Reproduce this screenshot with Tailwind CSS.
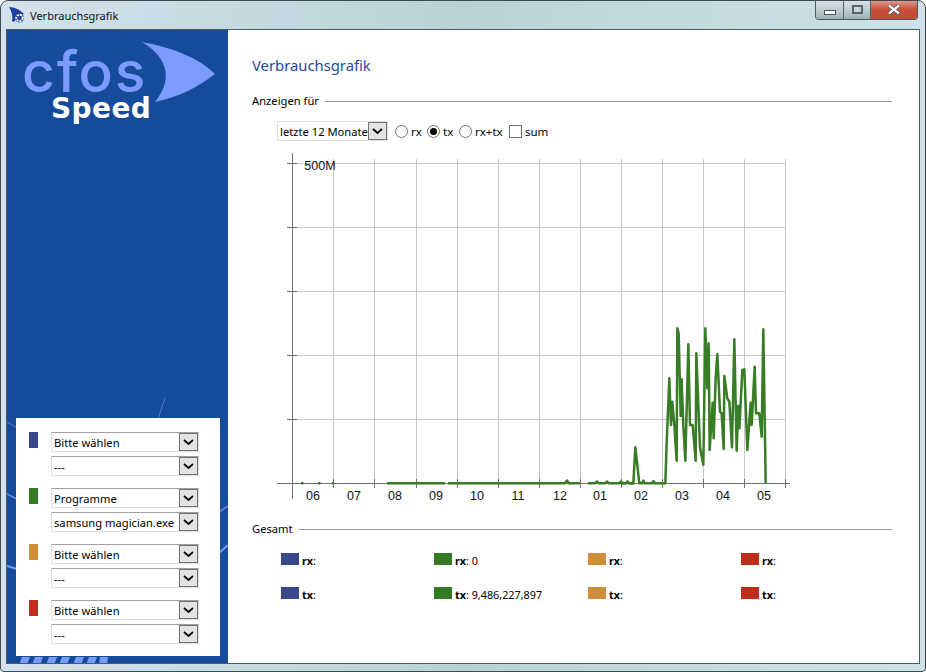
<!DOCTYPE html>
<html lang="de">
<head>
<meta charset="utf-8">
<title>Verbrauchsgrafik</title>
<script src="https://cdn.jsdelivr.net/npm/@tailwindcss/browser@4"></script>
</head>
<body class="bg-white overflow-hidden">
<div class="w-[926px] h-[672px] flex flex-col rounded-t-lg rounded-b-sm border border-[#3c4a52] bg-gradient-to-r from-[#d3e2ec] via-[#b9d2d8] to-[#cfe2ea] font-['Noto_Sans','Open_Sans',sans-serif] text-[11.2px] text-black overflow-hidden">
  <!-- title bar -->
  <div class="h-[28px] shrink-0 flex items-start pl-[8px] pr-[7px]">
    <svg class="mt-[6px] w-[17px] h-[17px]" viewBox="0 0 17 17"><path d="M0 0 C6 0 11 3 15 7 L9 9 L5 15 L3 14 C4 9 3 5 0 0Z" fill="#1c3f9c"/><circle cx="10.500" cy="11" r="4.500" fill="#1c3f9c"/><circle cx="10.500" cy="11" r="3.200" fill="none" stroke="#fff" stroke-width="2" stroke-dasharray="2 1"/><circle cx="10.500" cy="11" r="1" fill="#1c3f9c"/></svg>
    <span class="ml-[4px] mt-[6px] text-[11px] leading-[18px] text-[#101010]">Verbrauchsgrafik</span>
    <div class="ml-auto flex h-[20px] -mt-px border border-t-0 border-[#4c5a62] rounded-b-[4px] overflow-hidden">
      <div class="w-[28px] flex items-center justify-center border-r border-[#56646c] bg-gradient-to-b from-[#d7e2e6] via-[#c0ced2] to-[#9fb0b6]"><span class="w-[12px] h-[5px] mt-[5px] bg-white border border-[#4a5458]"></span></div>
      <div class="w-[27px] flex items-center justify-center border-r border-[#56646c] bg-gradient-to-b from-[#d7e2e6] via-[#c0ced2] to-[#9fb0b6]"><span class="w-[11px] h-[9px] border-2 border-[#5a6468] bg-[#c8d4d8]"></span></div>
      <div class="w-[46px] flex items-center justify-center bg-gradient-to-b from-[#e0a090] via-[#c9503a] to-[#c04a36]"><svg width="14" height="11" viewBox="0 0 14 11"><path d="M2 1.500 L12 9.500 M12 1.500 L2 9.500" stroke="#4a4a4a" stroke-width="4"/><path d="M2 1.500 L12 9.500 M12 1.500 L2 9.500" stroke="#fff" stroke-width="2.400"/></svg></div>
    </div>
  </div>
  <!-- client area -->
  <div class="flex-1 mx-[5px] mb-[7px] flex border border-[#4c5a62] bg-white min-h-0">
    <!-- sidebar -->
    <aside class="relative w-[221px] shrink-0 bg-[#164a9a] overflow-hidden">
      <svg class="absolute inset-0" width="221" height="636" viewBox="7 29 221 636">
        <path d="M142 41 C175 47 200 58 215 73 C197 87 178 96 155 101 C172 80 170 58 142 41Z" fill="#7b9bff"/>
        <path d="M165 397 L158 418" stroke="#4f7ad0" stroke-width="1"/>
        <path d="M7 421 L17 427" stroke="#4f7ad0" stroke-width="1"/>
        <path d="M7 493 L17 498" stroke="#6c90e8" stroke-width="1.500"/>
        <path d="M7 565 L17 568" stroke="#7b9bff" stroke-width="2"/>
        <path d="M219 511 L228 505" stroke="#6c90e8" stroke-width="1.500"/>
        <path d="M219 552 L228 544" stroke="#7b9bff" stroke-width="2"/>
        <path d="M22 656 h8 l-3 8 h-8Z M35 656 h8 l-3 8 h-8Z M49 656 h8 l-3 8 h-8Z M62 656 h8 l-3 8 h-8Z M76 656 h8 l-3 8 h-8Z M89 656 h8 l-3 8 h-8Z M100 656 h8 l-1 8 h-8Z" fill="#7b9bff"/>
      </svg>
      <div class="absolute left-[15px] top-[4px] text-[#7b9bff] font-['Inter',sans-serif] font-medium text-[57px] leading-[76px] tracking-[1.8px]">cfos</div>
      <div class="absolute left-[44px] top-[59px] text-white font-['DejaVu_Sans',sans-serif] font-bold text-[28px] leading-[40px] tracking-[0.4px]">Speed</div>
      <div class="absolute left-[9px] top-[388px] w-[204px] h-[238px] bg-white pt-[14px] pl-[13px] flex flex-col gap-[8px]">
        <div class="flex h-[48px]"><span class="w-[9px] h-[16px] bg-[#3b478d]"></span><div class="ml-[13px] flex flex-col gap-[4px]">
          <div class="w-[148px] h-[20px] flex border border-[#e0e0e0] border-t-[#a0a0a0] pl-[2px] leading-[19px]"><span class="flex-1">Bitte wählen</span><span class="w-[19px] h-[18px] flex items-center justify-center border border-[#707070] bg-[#e4e4e4]"><svg width="11" height="7" viewBox="0 0 11 7"><path d="M1 1 L5.500 5 L10 1" fill="none" stroke="#000" stroke-width="1.700"/></svg></span></div>
          <div class="w-[148px] h-[20px] flex border border-[#e0e0e0] border-t-[#a0a0a0] pl-[2px] leading-[19px]"><span class="flex-1">---</span><span class="w-[19px] h-[18px] flex items-center justify-center border border-[#707070] bg-[#e4e4e4]"><svg width="11" height="7" viewBox="0 0 11 7"><path d="M1 1 L5.500 5 L10 1" fill="none" stroke="#000" stroke-width="1.700"/></svg></span></div>
        </div></div>
        <div class="flex h-[48px]"><span class="w-[9px] h-[16px] bg-[#347a22]"></span><div class="ml-[13px] flex flex-col gap-[4px]">
          <div class="w-[148px] h-[20px] flex border border-[#e0e0e0] border-t-[#a0a0a0] pl-[2px] leading-[19px]"><span class="flex-1">Programme</span><span class="w-[19px] h-[18px] flex items-center justify-center border border-[#707070] bg-[#e4e4e4]"><svg width="11" height="7" viewBox="0 0 11 7"><path d="M1 1 L5.500 5 L10 1" fill="none" stroke="#000" stroke-width="1.700"/></svg></span></div>
          <div class="w-[148px] h-[20px] flex border border-[#e0e0e0] border-t-[#a0a0a0] pl-[2px] leading-[19px]"><span class="flex-1 whitespace-nowrap">samsung magician.exe</span><span class="w-[19px] h-[18px] shrink-0 flex items-center justify-center border border-[#707070] bg-[#e4e4e4]"><svg width="11" height="7" viewBox="0 0 11 7"><path d="M1 1 L5.500 5 L10 1" fill="none" stroke="#000" stroke-width="1.700"/></svg></span></div>
        </div></div>
        <div class="flex h-[48px]"><span class="w-[9px] h-[16px] bg-[#cf8e39]"></span><div class="ml-[13px] flex flex-col gap-[4px]">
          <div class="w-[148px] h-[20px] flex border border-[#e0e0e0] border-t-[#a0a0a0] pl-[2px] leading-[19px]"><span class="flex-1">Bitte wählen</span><span class="w-[19px] h-[18px] flex items-center justify-center border border-[#707070] bg-[#e4e4e4]"><svg width="11" height="7" viewBox="0 0 11 7"><path d="M1 1 L5.500 5 L10 1" fill="none" stroke="#000" stroke-width="1.700"/></svg></span></div>
          <div class="w-[148px] h-[20px] flex border border-[#e0e0e0] border-t-[#a0a0a0] pl-[2px] leading-[19px]"><span class="flex-1">---</span><span class="w-[19px] h-[18px] flex items-center justify-center border border-[#707070] bg-[#e4e4e4]"><svg width="11" height="7" viewBox="0 0 11 7"><path d="M1 1 L5.500 5 L10 1" fill="none" stroke="#000" stroke-width="1.700"/></svg></span></div>
        </div></div>
        <div class="flex h-[48px]"><span class="w-[9px] h-[16px] bg-[#bb2f1b]"></span><div class="ml-[13px] flex flex-col gap-[4px]">
          <div class="w-[148px] h-[20px] flex border border-[#e0e0e0] border-t-[#a0a0a0] pl-[2px] leading-[19px]"><span class="flex-1">Bitte wählen</span><span class="w-[19px] h-[18px] flex items-center justify-center border border-[#707070] bg-[#e4e4e4]"><svg width="11" height="7" viewBox="0 0 11 7"><path d="M1 1 L5.500 5 L10 1" fill="none" stroke="#000" stroke-width="1.700"/></svg></span></div>
          <div class="w-[148px] h-[20px] flex border border-[#e0e0e0] border-t-[#a0a0a0] pl-[2px] leading-[19px]"><span class="flex-1">---</span><span class="w-[19px] h-[18px] flex items-center justify-center border border-[#707070] bg-[#e4e4e4]"><svg width="11" height="7" viewBox="0 0 11 7"><path d="M1 1 L5.500 5 L10 1" fill="none" stroke="#000" stroke-width="1.700"/></svg></span></div>
        </div></div>
      </div>
    </aside>
    <!-- main -->
    <main class="flex-1 pl-[24px] pr-[27px] pt-[25px] min-w-0">
      <h1 class="text-[14.800px] leading-[20px] text-[#1a4a9f]">Verbrauchsgrafik</h1>
      <div class="mt-[17px] flex items-center h-[18px] gap-[6px]"><span class="whitespace-nowrap">Anzeigen für</span><span class="flex-1 h-px bg-[#999]"></span></div>
      <div class="mt-[11px] ml-[25px] flex items-center h-[20px]">
        <div class="w-[111px] h-[20px] flex border border-[#e0e0e0] pl-[2px] leading-[19px]"><span class="flex-1 whitespace-nowrap">letzte 12 Monate</span><span class="w-[19px] h-[18px] shrink-0 flex items-center justify-center border border-[#707070] bg-[#e4e4e4]"><svg width="11" height="7" viewBox="0 0 11 7"><path d="M1 1 L5.500 5 L10 1" fill="none" stroke="#000" stroke-width="1.700"/></svg></span></div>
        <span class="ml-[7px] w-[13px] h-[13px] shrink-0 rounded-full border border-[#707070] bg-white"></span><span class="ml-[3px] w-[16px] mt-[2px] text-[11.500px]">rx</span>
        <span class="w-[13px] h-[13px] shrink-0 rounded-full border border-[#707070] bg-white flex items-center justify-center"><span class="w-[7px] h-[7px] rounded-full bg-black"></span></span><span class="ml-[3px] w-[16px] mt-[2px] text-[11.500px]">tx</span>
        <span class="w-[13px] h-[13px] shrink-0 rounded-full border border-[#707070] bg-white"></span><span class="ml-[3px] w-[34px] mt-[2px] text-[11.500px]">rx+tx</span>
        <span class="w-[13px] h-[13px] shrink-0 border border-[#707070] bg-white"></span><span class="ml-[3px] mt-[2px] text-[11.500px]">sum</span>
      </div>
      <svg class="block -ml-[1px] mt-[11px]" width="550" height="360" viewBox="251 152 550 360">
        <g stroke="#c8c8c8" stroke-width="1" shape-rendering="crispEdges">
          <path d="M289 163.500H785 M289 227.500H785 M289 291.500H785 M289 355.500H785 M289 419.500H785"/>
          <path d="M333.500 159V483 M374.500 159V483 M416.500 159V483 M457.500 159V483 M498.500 159V483 M539.500 159V483 M580.500 159V483 M621.500 159V483 M662.500 159V483 M703.500 159V483 M744.500 159V483 M785.500 159V483"/>
        </g>
        <g stroke="#707070" stroke-width="1" shape-rendering="crispEdges">
          <path d="M292.500 153V499 M277 483.500H790"/>
          <path d="M287 163.500H297 M287 227.500H297 M287 291.500H297 M287 355.500H297 M287 419.500H297"/>
          <path d="M333.500 479V488 M374.500 479V488 M416.500 479V488 M457.500 479V488 M498.500 479V488 M539.500 479V488 M580.500 479V488 M621.500 479V488 M662.500 479V488 M703.500 479V488 M744.500 479V488 M785.500 479V488"/>
        </g>
        <g fill="none" stroke="#387c25" stroke-width="2.400" stroke-linejoin="round">
          <path d="M301 483.300h2.500 M318 483.300h2.500 M332 483.300h2"/>
          <path d="M387 483.300H445 M448 483.300H565 L567 480.500 L569 483.300H580 M588 483.300H595 L597 481.500 L599 483.300H605 L607 481.500 L609 483.300H619 L621 481.500 L623 483.300H626 L627.500 481.500 L629 483.300H634"/>
          <polyline transform="translate(620 310) scale(0.33333)" stroke-width="7.500" points="0,517 8,520 18,520 22,515 26,520 40,520 46,412 58,520 66,520 70,512 74,520 96,520 100,513 104,520 136,520 140,400 148,205 153,345 157,275 163,345 170,452 172,55 176,70 182,318 185,208 190,348 196,452 205,103 210,345 218,345 227,452 229,130 240,412 250,464 256,55 262,235 266,100 269,420 278,278 281,385 287,205 292,133 300,305 305,310 311,417 313,198 322,265 328,275 336,412 343,88 350,422 355,287 358,355 367,180 373,178 382,420 392,278 395,345 404,170 408,310 418,310 425,380 430,58 437,520"/>
        </g>
        <g font-family="Liberation Sans, sans-serif" font-size="12.500" fill="#111" text-anchor="middle">
          <text x="320" y="170">500M</text>
          <text x="313" y="500">06</text><text x="354" y="500">07</text><text x="395" y="500">08</text><text x="436" y="500">09</text><text x="477" y="500">10</text><text x="518" y="500">11</text><text x="560" y="500">12</text><text x="600" y="500">01</text><text x="641" y="500">02</text><text x="682" y="500">03</text><text x="723" y="500">04</text><text x="764" y="500">05</text>
        </g>
      </svg>
      <div class="mt-[8px] flex items-center h-[18px] gap-[6px]"><span>Gesamt</span><span class="flex-1 h-px bg-[#999]"></span></div>
      <div class="mt-[15px] ml-[29px] grid grid-cols-[153px_154px_153px_auto] gap-y-[20px] text-[10.800px] leading-[12px]">
        <div class="flex"><span class="w-[18px] h-[12px] bg-[#3b478d]"></span><span class="ml-[3px] mt-[2px]"><b>rx</b>:</span></div>
        <div class="flex"><span class="w-[18px] h-[12px] bg-[#347a22]"></span><span class="ml-[3px] mt-[2px]"><b>rx</b>: 0</span></div>
        <div class="flex"><span class="w-[18px] h-[12px] bg-[#cf8e39]"></span><span class="ml-[3px] mt-[2px]"><b>rx</b>:</span></div>
        <div class="flex"><span class="w-[18px] h-[12px] bg-[#bb2f1b]"></span><span class="ml-[3px] mt-[2px]"><b>rx</b>:</span></div>
        <div class="flex"><span class="w-[18px] h-[12px] bg-[#3b478d]"></span><span class="ml-[3px] mt-[2px]"><b>tx</b>:</span></div>
        <div class="flex"><span class="w-[18px] h-[12px] bg-[#347a22]"></span><span class="ml-[3px] mt-[2px]"><b>tx</b>: 9,486,227,897</span></div>
        <div class="flex"><span class="w-[18px] h-[12px] bg-[#cf8e39]"></span><span class="ml-[3px] mt-[2px]"><b>tx</b>:</span></div>
        <div class="flex"><span class="w-[18px] h-[12px] bg-[#bb2f1b]"></span><span class="ml-[3px] mt-[2px]"><b>tx</b>:</span></div>
      </div>
    </main>
  </div>
</div>
</body>
</html>
